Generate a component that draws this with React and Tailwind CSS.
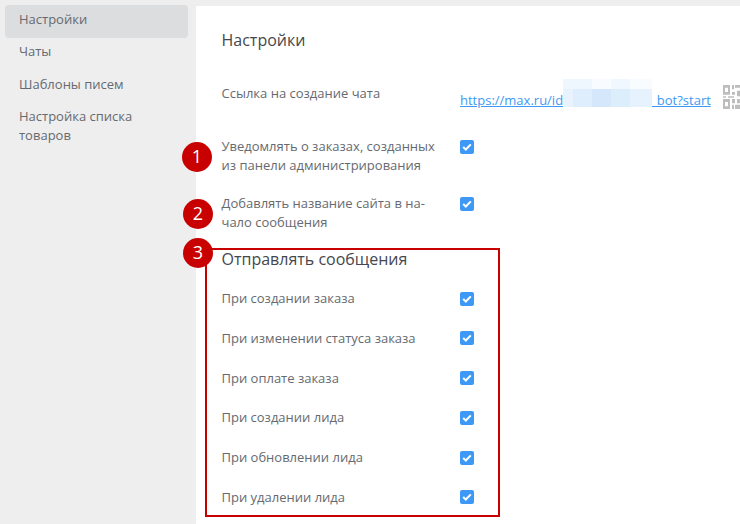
const menu = ['Настройки', 'Чаты', 'Шаблоны писем', 'Настройка списка товаров']
const events = ['При создании заказа', 'При изменении статуса заказа', 'При оплате заказа', 'При создании лида', 'При обновлении лида', 'При удалении лида']

function Check() {
  return (
    <span className="flex h-[14px] w-[14px] shrink-0 items-center justify-center rounded-[2px] bg-[#3d99f5]">
      <svg width="10" height="8" viewBox="0 0 10 8" fill="none">
        <path d="M1.2 4.1 3.8 6.5 8.8 1.4" stroke="#fff" strokeWidth="2" />
      </svg>
    </span>
  )
}

function Badge({ n, className }) {
  return (
    <div className={`absolute flex h-[30px] w-[30px] items-center justify-center rounded-full bg-[#c80000] pb-[2px] text-[18px] text-white ${className}`}>{n}</div>
  )
}

function Qr() {
  const cells = ['M0 0h7v7H0zM2 2v3h3V2z', 'M0 10h7v7H0zM2 12v3h3v-3z', 'M9 0h2v3H9zM12 0h5v2h-5zM9 5h3v2H9zM14 4h3v4h-3zM0 8h3v1H0zM5 8h6v1H5zM9 10h3v3H9zM14 10h3v3h-3zM9 14h2v3H9zM12 14h5v3h-5z']
  return (
    <svg width="17" height="24" viewBox="0 0 17 24" className="shrink-0">
      <g transform="scale(1 1.41)" fill="#bdbdbd" fillRule="evenodd">
        {cells.map(d => <path key={d} d={d} />)}
      </g>
    </svg>
  )
}

export default function App() {
  return (
    <div className="relative flex h-[524px] w-[740px] overflow-hidden bg-[#eeeeee] pt-[5px] font-['Open_Sans',sans-serif] text-[13px] leading-[19px] text-[#666a70]">
      <nav className="w-[196px] shrink-0 pl-[5px] pr-2">
        {menu.map((m, i) => (
          <div key={m} className={`rounded-[4px] pt-[4.5px] pb-[9px] pl-[14px] pr-3 ${i === 0 ? 'bg-[#dcdddf]' : ''}`}>{m}</div>
        ))}
      </nav>

      <main className="mt-px flex-1 bg-white pl-[25.5px]">
        <h1 className="pt-[24px] text-[16px] leading-[20px] text-[#44484e]">Настройки</h1>

        <div className="mt-[35px] flex h-[52px]">
          <div className="w-[238.5px] shrink-0 -mt-[1px]">Ссылка на создание чата</div>
          <div className="relative flex items-start gap-[12px]">
            <a className="mt-[6px] whitespace-nowrap text-[#3d99f5] underline">https://max.ru/id<span className="tracking-[-0.1px]">000000000000</span>_bot?start</a>
            <Qr />
            <div className="absolute left-[103px] top-[-6px] grid h-[28px] w-[89px] grid-cols-[10px_19px_19px_19px_22px] grid-rows-[10px_18px]">
              <div className="bg-[#eef6fe]" /><div className="bg-[#eef6fe]" /><div className="bg-[#f8fbff]" /><div className="bg-[#f0f7fe]" /><div className="bg-[#f9fcff]" />
              <div className="bg-[#e9f3fd]" /><div className="bg-[#dfeefc]" /><div className="bg-[#d5e8fb]" /><div className="bg-[#dcedfc]" /><div className="bg-[#e6f2fd]" />
            </div>
          </div>
        </div>

        <div className="flex h-[57px]">
          <div className="w-[238.5px] shrink-0 pr-[15px] leading-[18.6px]">Уведомлять о заказах, созданных из панели администрирования</div>
          <div className="pt-[3px]"><Check /></div>
        </div>
        <div className="flex h-[55px]">
          <div className="w-[238.5px] shrink-0 leading-[18.6px]">Добавлять название сайта в на-<br />чало сообщения</div>
          <div className="pt-[3px]"><Check /></div>
        </div>

        <h2 className="text-[16px] leading-[20px] text-[#44484e]">Отправлять сообщения</h2>
        <div className="mt-[9.75px]">
          {events.map(e => (
            <div key={e} className="flex h-[39.75px] items-center">
              <div className="w-[238.5px] shrink-0">{e}</div>
              <Check />
            </div>
          ))}
        </div>
      </main>

      <div className="absolute left-[205px] top-[248px] h-[269px] w-[295px] border-2 border-[#c80000]" />
      <Badge n="1" className="left-[182px] top-[142px]" />
      <Badge n="2" className="left-[183px] top-[199px]" />
      <Badge n="3" className="left-[183px] top-[238px]" />
    </div>
  )
}
